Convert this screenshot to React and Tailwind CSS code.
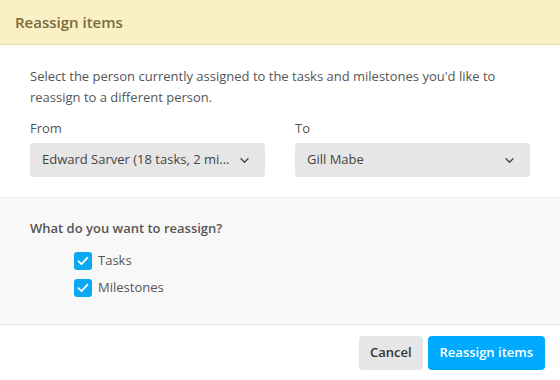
import { useState } from "react";

function Chevron() {
  return (
    <svg width="9" height="5" viewBox="0 0 9 5" fill="none" className="shrink-0">
      <path d="M1 0.8l3.5 3.4 3.5-3.4" stroke="#444" strokeWidth="1.3" strokeLinecap="round" strokeLinejoin="round" />
    </svg>
  );
}

function Select({ value }) {
  return (
    <div className="flex h-[34px] items-center justify-between rounded-[4px] bg-[#e6e6e6] pl-[12px] pr-[16px] text-[13px] text-[#444]">
      <span className="truncate">{value}</span>
      <Chevron />
    </div>
  );
}

function Check({ label, checked, onToggle }) {
  return (
    <label className="flex h-[27px] cursor-pointer items-center gap-[6px] pl-[44px]" onClick={onToggle}>
      <span className={`flex h-[18px] w-[18px] items-center justify-center rounded-[3px] ${checked ? "bg-[#0aa9f4]" : "border border-[#ccc] bg-white"}`}>
        {checked && (
          <svg width="12" height="10" viewBox="0 0 12 10" fill="none">
            <path d="M1.5 5.2l3 3 6-6.5" stroke="white" strokeWidth="1.8" strokeLinecap="round" strokeLinejoin="round" />
          </svg>
        )}
      </span>
      <span className="text-[13px] text-[#555]">{label}</span>
    </label>
  );
}

export default function App() {
  const [tasks, setTasks] = useState(true);
  const [milestones, setMilestones] = useState(true);

  return (
    <div className="flex h-[380px] w-[560px] flex-col bg-white font-['Open_Sans',sans-serif]">
      {/* Header */}
      <div className="flex h-[45px] items-center border-b border-[#e8dcaa] bg-[#f9f0c5] px-[15px]">
        <h1 className="text-[15px] font-semibold text-[#7b6a3e]">Reassign items</h1>
      </div>

      {/* Person selection */}
      <div className="border-b border-[#e9e9e9] px-[30px] pt-[21px] pb-[20px]">
        <p className="text-[13px] leading-[21px] text-[#555]">
          Select the person currently assigned to the tasks and milestones you'd like to reassign to a different person.
        </p>
        <div className="mt-[11px] grid grid-cols-2 gap-[30px]">
          <div>
            <div className="mb-[6px] text-[13px] leading-[18px] text-[#555]">From</div>
            <Select value="Edward Sarver (18 tasks, 2 mi..." />
          </div>
          <div>
            <div className="mb-[6px] text-[13px] leading-[18px] text-[#555]">To</div>
            <Select value="Gill Mabe" />
          </div>
        </div>
      </div>

      {/* What to reassign */}
      <div className="border-b border-[#e6e6e6] bg-[#f8f8f8] px-[30px] pt-[20px] pb-[23px]">
        <div className="text-[13px] font-semibold leading-[20px] text-[#555]">What do you want to reassign?</div>
        <div className="mt-[9px]">
          <Check label="Tasks" checked={tasks} onToggle={() => setTasks(!tasks)} />
          <Check label="Milestones" checked={milestones} onToggle={() => setMilestones(!milestones)} />
        </div>
      </div>

      {/* Footer */}
      <div className="flex justify-end gap-[5px] pt-[11px] pr-[15px]">
        <button className="h-[34px] rounded-[4px] bg-[#e6e6e6] px-[11px] text-[13px] font-semibold text-[#333]">Cancel</button>
        <button className="h-[34px] rounded-[4px] bg-[#00aaff] px-[12px] text-[13px] font-semibold text-white">Reassign items</button>
      </div>
    </div>
  );
}
